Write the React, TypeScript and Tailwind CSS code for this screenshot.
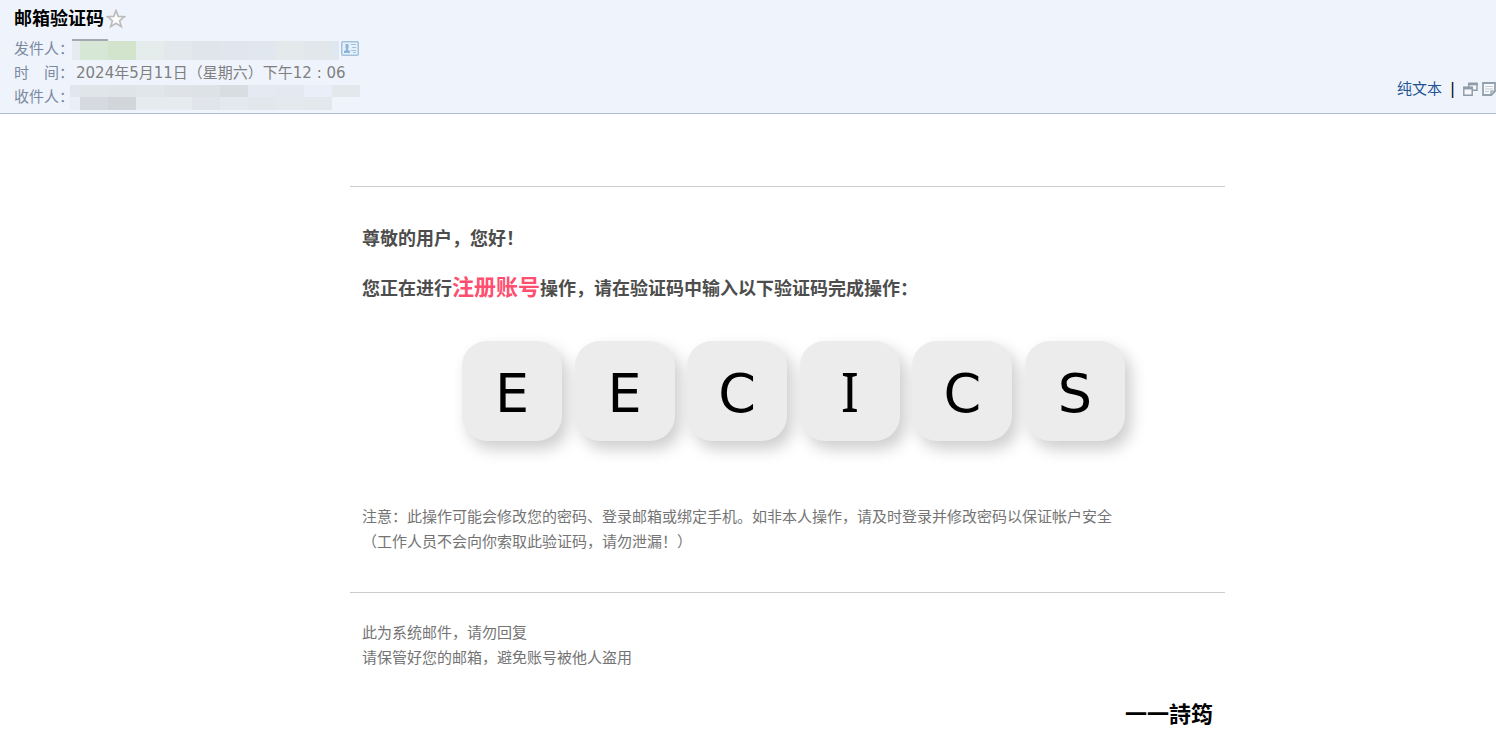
import { clsx } from "clsx";

interface MosaicProps {
    blocks: string[];
    className?: string;
}

const Mosaic: React.FC<MosaicProps> = ({ blocks, className }) => {
    return <div className={clsx("flex", className)} aria-hidden="true">
        {blocks.map((block, i) => <span key={i} className={block} />)}
    </div>
}

const SENDER = [
    "w-2 bg-[#e5ecf0]",
    "w-7 bg-[#d7e7d6]",
    "w-7 bg-[#d2e5cc]",
    "w-7 bg-[#e5edec]",
    "w-7 bg-[#e2e8eb]",
    "w-7 bg-[#e0e5ec]",
    "w-7 bg-[#e1e6ee]",
    "w-7 bg-[#e1e7ef]",
    "w-7 bg-[#e4e9ec]",
    "w-7 bg-[#e2e7ec]",
    "w-[7px] bg-[#dfe8f0]",
];

const RECEIVER_TOP = [
    "w-[10px] bg-[#e1e7ef]",
    "w-7 bg-[#e0e5ea]",
    "w-7 bg-[#dfe4e9]",
    "w-7 bg-[#e1e6ea]",
    "w-7 bg-[#dfe3e8]",
    "w-7 bg-[#dde2e6]",
    "w-7 bg-[#d8dde1]",
    "w-7 bg-[#e4e9f2]",
    "w-7 bg-[#e3e8f1]",
    "w-7 bg-[#e9eef8]",
    "w-7 bg-[#e3e8ed]",
];

const RECEIVER_BOTTOM = [
    "w-[10px] bg-[#e9eff7]",
    "w-7 bg-[#d6dae0]",
    "w-7 bg-[#d2d6db]",
    "w-7 bg-[#e6ebf0]",
    "w-7 bg-[#e6ebef]",
    "w-7 bg-[#e1e5eb]",
    "w-7 bg-[#e4e9ef]",
    "w-7 bg-[#e2e7ec]",
    "w-7 bg-[#e4e9ee]",
    "w-7 bg-[#e3e8ec]",
];

const StarIcon = () => {
    return <svg className="size-5" viewBox="0 0 20 20" fill="#fdfdfd" stroke="#bcbcbc" strokeWidth="1.7">
        <path d="M10 1.5 12.2 7.4 18.4 7.7 13.6 11.7 15.3 17.6 10 14.3 4.7 17.6 6.4 11.7 1.6 7.7 7.8 7.4Z" />
    </svg>
}

const ContactIcon = () => {
    return <svg className="block w-[18px] h-[15px]" viewBox="0 0 18 15" fill="none">
        <rect x="0.75" y="0.75" width="16.5" height="13.5" rx="1" fill="#e4f0fa" stroke="#a3c1da" strokeWidth="1.5" />
        <path d="M4.5 3h3v4l-.5 1v1l2 1v2H3v-2l2-1V8l-.5-1Z" fill="#8ab4d8" />
        <path d="M10 3.5h5M11 6.5h4M10 9.5h5M12 11.5h3" stroke="#a3c1da" />
    </svg>
}

const WindowIcon = () => {
    return <svg className="w-[15px] h-[14px]" viewBox="0 0 15 14" fill="#f4f7fb" stroke="#8f9ba7" strokeWidth="1.4">
        <path d="M5.7 1.5h8.3v6.8H5.7Z" />
        <path d="M5 2h9.7" strokeWidth="2.6" />
        <path d="M.8 5.5h8.4v7.7H.8Z" />
        <path d="M.1 6h9.8" strokeWidth="2.8" />
    </svg>
}

const NoteIcon = () => {
    return <svg className="size-[14px]" viewBox="0 0 14 14" fill="none" stroke="#93a0ad">
        <path d="M1 1h12v8.4L9.2 13H1Z" fill="#f9fafc" strokeWidth="1.8" />
        <path d="M3 4.5h8M3 7h8M3 9.5h4" stroke="#c3cad2" />
        <path d="M9 13V9.2h4" strokeWidth="1.3" />
    </svg>
}

const Header = () => {
    return <header className="flex justify-between items-end bg-[#eff4fc] border-b border-[#a9bfd3] pl-3.5 pt-[7px] pb-1 text-[15px]">
        <div>
            <div className="flex items-center gap-0.5 mb-1.5">
                <h1 className="text-lg leading-6 font-bold text-black">邮箱验证码</h1>
                <button type="button" aria-label="星标"><StarIcon /></button>
            </div>
            <dl className="leading-6 text-[#7b8aa0] whitespace-nowrap">
                <div className="flex h-6">
                    <dt className="w-[58px]">发件人：</dt>
                    <dd className="flex items-start">
                        <div className="pt-0.5">
                            <div className="w-9 h-0.5 bg-[#a3a8b1]" />
                            <Mosaic blocks={SENDER} className="h-[19px]" />
                        </div>
                        <button type="button" aria-label="联系人" className="pt-1 ml-0.5"><ContactIcon /></button>
                    </dd>
                </div>
                <div className="flex h-6">
                    <dt className="w-[62px]">时　间：</dt>
                    <dd className="text-[#7f7f7f]">2024年5月11日（星期六）下午12 : 06</dd>
                </div>
                <div className="flex h-6">
                    <dt className="w-14">收件人：</dt>
                    <dd>
                        <Mosaic blocks={RECEIVER_TOP} className="h-3" />
                        <Mosaic blocks={RECEIVER_BOTTOM} className="h-[13px]" />
                    </dd>
                </div>
            </dl>
        </div>
        <div className="flex items-center gap-1 pb-2 leading-6">
            <a href="#text" className="text-[#1e5494]">纯文本</a>
            <span className="px-1 text-black">|</span>
            <button type="button" aria-label="新窗口"><WindowIcon /></button>
            <button type="button" aria-label="便签"><NoteIcon /></button>
        </div>
    </header>
}

interface KeyProps {
    letter: string;
}

const Key: React.FC<KeyProps> = ({ letter }) => {
    return <li className={clsx(
        "flex items-center justify-center size-[100px] rounded-[25px] bg-[#ececec] text-[54px] leading-none text-black shadow-[6px_8px_16px_rgba(0,0,0,0.2)]",
        letter === "I" ? "font-['Noto_Sans']" : "pt-1.5",
    )}>
        {letter}
    </li>
}

const App = () => {
    return <div className="bg-white font-['DejaVu_Sans','Noto_Sans_CJK_SC',sans-serif]" lang="zh-CN">
        <Header />
        <main className="pl-[79px] pt-[72px]">
            <div className="max-w-[875px] mx-auto">
                <section className="border-t border-[#cccccc] px-3 pt-10 pb-[37px]">
                    <div className="text-lg font-bold text-[#4d4d4d]">
                        <p className="leading-6">尊敬的用户，您好！</p>
                        <p className="leading-8 mt-[21px]">
                            您正在进行<span className="text-[22px] text-[#ff4f70]">注册账号</span>操作，请在验证码中输入以下验证码完成操作：
                        </p>
                    </div>
                    <ul className="flex justify-between pl-[100px] pr-[88px] mt-9">
                        {"EECICS".split("").map((letter, i) => <Key key={i} letter={letter} />)}
                    </ul>
                    <p className="mt-16 text-[15px] leading-[25px] text-[#747474]">
                        注意：此操作可能会修改您的密码、登录邮箱或绑定手机。如非本人操作，请及时登录并修改密码以保证帐户安全
                        <br />
                        （工作人员不会向你索取此验证码，请勿泄漏！）
                    </p>
                </section>
                <footer className="border-t border-[#cccccc] px-3 pt-7 pb-5">
                    <p className="text-[15px] leading-[25px] text-[#747474]">
                        此为系统邮件，请勿回复
                        <br />
                        请保管好您的邮箱，避免账号被他人盗用
                    </p>
                    <p className="mt-7 text-right text-[22px] leading-8 font-bold text-black">一一詩筠</p>
                </footer>
            </div>
        </main>
    </div>
}

export default App
